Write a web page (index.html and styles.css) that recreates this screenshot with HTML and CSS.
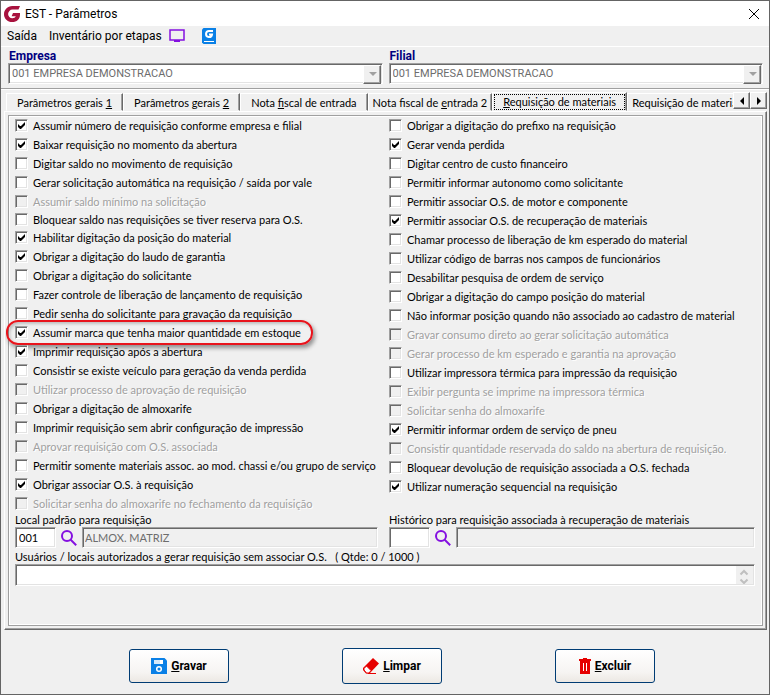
FILE: index.html
```html
<!DOCTYPE html>
<html lang="pt-BR">
<head>
<meta charset="utf-8">
<title>EST - Parâmetros</title>
<link rel="stylesheet" href="styles.css">
</head>
<body>
<div class="window">
  <header class="titlebar">
    <svg class="logo" viewBox="0 0 16 16" aria-hidden="true"><path fill="#a8123e" d="M16 0l-1.500 3.600H8.500A4.400 4.400 0 0 0 4.100 8a4.200 4.200 0 0 0 4.200 4.200c1.800 0 3-.7 3.500-1.900H7.600L9 7h7v1.400c0 4.600-3.200 7.600-7.800 7.600C3.500 16 0 12.700 0 8.200S3.500 0 8.200 0z"/></svg>
    <h1>EST - Parâmetros</h1>
    <button class="close" type="button" aria-label="Fechar"><svg viewBox="0 0 10 10"><path d="M0 0l10 10M10 0L0 10" stroke="#000" fill="none"/></svg></button>
  </header>
  <nav class="menu">
    <a href="#">Saída</a>
    <a href="#">Inventário por etapas</a>
    <button type="button" aria-label="Tela"><svg width="16" height="14" viewBox="0 0 16 14"><path d="M1 1h14v10H1z" fill="none" stroke="#8410e0" stroke-width="1.500"/><path d="M5 11h6v2H5z" fill="#8410e0"/></svg></button>
    <button type="button" aria-label="Ajuda"><svg width="14" height="16" viewBox="0 0 14 16"><path d="M1.500 0H14v16H1.500L0 14.500v-13z" fill="#0a80e6"/><path d="M11 3H7a3 3 0 1 0 3 3.500H7" fill="none" stroke="#fff" stroke-width="2"/><path d="M2 13.500h10" stroke="#fff"/></svg></button>
  </nav>
  <section class="company">
    <div class="field">
      <label for="empresa">Empresa</label>
      <div class="combo"><select id="empresa" disabled><option>001 EMPRESA DEMONSTRACAO</option></select></div>
    </div>
    <div class="field">
      <label for="filial">Filial</label>
      <div class="combo"><select id="filial" disabled><option>001 EMPRESA DEMONSTRACAO</option></select></div>
    </div>
  </section>
  <main>
    <div class="tabbar">
      <div class="tabs" role="tablist">
        <button type="button" role="tab">Parâmetros gerais <u>1</u></button>
        <button type="button" role="tab">Parâmetros gerais <u>2</u></button>
        <button type="button" role="tab">Nota <u>f</u>iscal de entrada</button>
        <button type="button" role="tab" class="snug">Nota fiscal de <u>e</u>ntrada 2</button>
        <button type="button" role="tab" class="active" aria-selected="true"><span><u>R</u>equisição de materiais</span></button>
        <button type="button" role="tab" class="snug">Requisição de materiais</button>
      </div>
      <button class="scroll prev" type="button" aria-label="Anterior"></button>
      <button class="scroll next" type="button" aria-label="Próxima"></button>
    </div>
    <div class="page">
      <form class="sheet">
        <div class="column">
          <ul>
            <li><label><input type="checkbox" checked>Assumir número de requisição conforme empresa e filial</label></li>
            <li><label><input type="checkbox" checked>Baixar requisição no momento da abertura</label></li>
            <li><label><input type="checkbox">Digitar saldo no movimento de requisição</label></li>
            <li><label><input type="checkbox">Gerar solicitação automática na requisição / saída por vale</label></li>
            <li class="tight"><label class="off"><input type="checkbox" disabled>Assumir saldo mínimo na solicitação</label></li>
            <li class="tight"><label><input type="checkbox">Bloquear saldo nas requisições se tiver reserva para O.S.</label></li>
            <li><label><input type="checkbox" checked>Habilitar digitação da posição do material</label></li>
            <li><label><input type="checkbox" checked>Obrigar a digitação do laudo de garantia</label></li>
            <li><label><input type="checkbox">Obrigar a digitação do solicitante</label></li>
            <li><label><input type="checkbox">Fazer controle de liberação de lançamento de requisição</label></li>
            <li><label><input type="checkbox">Pedir senha do solicitante para gravação da requisição</label></li>
            <li><label class="marked"><input type="checkbox" checked>Assumir marca que tenha maior quantidade em estoque</label></li>
            <li><label><input type="checkbox" checked>Imprimir requisição após a abertura</label></li>
            <li><label><input type="checkbox">Consistir se existe veículo para geração da venda perdida</label></li>
            <li><label class="off"><input type="checkbox" disabled>Utilizar processo de aprovação de requisição</label></li>
            <li><label><input type="checkbox">Obrigar a digitação de almoxarife</label></li>
            <li><label><input type="checkbox">Imprimir requisição sem abrir configuração de impressão</label></li>
            <li><label class="off"><input type="checkbox" disabled>Aprovar requisição com O.S. associada</label></li>
            <li><label><input type="checkbox">Permitir somente materiais assoc. ao mod. chassi e/ou grupo de serviço</label></li>
            <li><label><input type="checkbox" checked>Obrigar associar O.S. à requisição</label></li>
            <li><label class="off"><input type="checkbox" disabled>Solicitar senha do almoxarife no fechamento da requisição</label></li>
          </ul>
          <div class="lookup">
            <label for="local">Local padrão para requisição</label>
            <div class="row">
              <input id="local" class="code" type="text" value="001">
              <button type="button" aria-label="Pesquisar local"><svg viewBox="0 0 16 16"><circle cx="6" cy="6" r="5" fill="none" stroke="#8410e0" stroke-width="2"/><path d="M9.700 9.700l5.500 5.500" stroke="#8410e0" stroke-width="2"/></svg></button>
              <input class="name" type="text" value="ALMOX. MATRIZ" aria-label="Nome do local" disabled>
            </div>
          </div>
        </div>
        <div class="column">
          <ul>
            <li><label><input type="checkbox">Obrigar a digitação do prefixo na requisição</label></li>
            <li><label><input type="checkbox" checked>Gerar venda perdida</label></li>
            <li><label><input type="checkbox">Digitar centro de custo financeiro</label></li>
            <li><label><input type="checkbox">Permitir informar autonomo como solicitante</label></li>
            <li><label><input type="checkbox">Permitir associar O.S. de motor e componente</label></li>
            <li><label><input type="checkbox" checked>Permitir associar O.S. de recuperação de materiais</label></li>
            <li><label><input type="checkbox">Chamar processo de liberação de km esperado do material</label></li>
            <li><label><input type="checkbox">Utilizar código de barras nos campos de funcionários</label></li>
            <li><label><input type="checkbox">Desabilitar pesquisa de ordem de serviço</label></li>
            <li><label><input type="checkbox">Obrigar a digitação do campo posição do material</label></li>
            <li><label><input type="checkbox">Não informar posição quando não associado ao cadastro de material</label></li>
            <li><label class="off"><input type="checkbox" disabled>Gravar consumo direto ao gerar solicitação automática</label></li>
            <li><label class="off"><input type="checkbox" disabled>Gerar processo de km esperado e garantia na aprovação</label></li>
            <li><label><input type="checkbox">Utilizar impressora térmica para impressão da requisição</label></li>
            <li><label class="off"><input type="checkbox" disabled>Exibir pergunta se imprime na impressora térmica</label></li>
            <li><label class="off"><input type="checkbox" disabled>Solicitar senha do almoxarife</label></li>
            <li><label><input type="checkbox" checked>Permitir informar ordem de serviço de pneu</label></li>
            <li><label class="off"><input type="checkbox" disabled>Consistir quantidade reservada do saldo na abertura de requisição.</label></li>
            <li><label><input type="checkbox">Bloquear devolução de requisição associada a O.S. fechada</label></li>
            <li><label><input type="checkbox" checked>Utilizar numeração sequencial na requisição</label></li>
          </ul>
          <div class="lookup">
            <label for="historico">Histórico para requisição associada à recuperação de materiais</label>
            <div class="row">
              <input id="historico" class="code" type="text">
              <button type="button" aria-label="Pesquisar histórico"><svg viewBox="0 0 16 16"><circle cx="6" cy="6" r="5" fill="none" stroke="#8410e0" stroke-width="2"/><path d="M9.700 9.700l5.500 5.500" stroke="#8410e0" stroke-width="2"/></svg></button>
              <input class="name" type="text" aria-label="Nome do histórico" disabled>
            </div>
          </div>
        </div>
        <div class="users">
          <label for="usuarios">Usuários / locais autorizados a gerar requisição sem associar O.S. &nbsp; ( Qtde: 0 / 1000 )</label>
          <div class="memo">
            <textarea id="usuarios" rows="1"></textarea>
            <svg width="17" height="18" viewBox="0 0 17 18" aria-hidden="true"><path d="M0 0h17v18H0z" fill="#f0f0f0"/><path d="M4.500 8.500L8 5l3.500 3.500M4.500 13.500L8 17l3.500-3.500" fill="none" stroke="#bfbfbf" stroke-width="2"/></svg>
          </div>
        </div>
      </form>
    </div>
  </main>
  <footer>
    <button type="button"><svg viewBox="0 0 16 16"><path d="M0 0h13.500L16 2.500V16H0z" fill="#0a80e6"/><path d="M3 2h9v4H3z" fill="#fff"/><path d="M3 2h6v4H3z" fill="#d5e9fa"/><circle cx="8" cy="11" r="2.300" fill="none" stroke="#fff" stroke-width="1.500"/></svg><span><u>G</u>ravar</span></button>
    <button type="button" class="tall"><svg viewBox="0 0 16 16"><path d="M10 0l6 5.500L6.500 15.500H3L0 12V10z" fill="#e60000"/><path d="M3.500 8l4.500 4.500-2 2.500H3.500L1 12v-1.500z" fill="#fff"/><path d="M3.500 8l4.500 4.500-2 2.500H3.500L1 12v-1.500zM5 15.500h8" fill="none" stroke="#e60000"/></svg><span><u>L</u>impar</span></button>
    <button type="button"><svg class="bin" viewBox="0 0 12 16"><path d="M0 1h4V0h4v1h4v2H0zM1 3h10v13H1z" fill="#e60000"/><path d="M4.500 5v8M7.500 5v8" stroke="#fff"/></svg><span><u>E</u>xcluir</span></button>
  </footer>
</div>
</body>
</html>
```
FILE: styles.css
```css
* { box-sizing: border-box; }
body {
  margin: 0;
  background: #f0f0f0;
  color: #000;
  font: 11px/13px Lato, "Liberation Sans", sans-serif;
}
button, input, select, textarea { font: inherit; color: inherit; margin: 0; }
button { padding: 0; border: 0; background: none; }
svg { display: block; }
u { text-decoration-thickness: 1px; text-underline-offset: 1px; text-decoration-skip-ink: none; }

.window {
  min-height: 100vh;
  border: 1px solid #646464;
  display: flex;
  flex-direction: column;
}

.titlebar {
  display: flex;
  align-items: center;
  gap: 5px;
  height: 25px;
  padding: 0 10px 0 3px;
  background: #fff;
}
.logo { width: 16px; height: 16px; }
.titlebar h1 { flex: 1; margin: 0; font: 12px/14px Roboto, sans-serif; }
.close svg { width: 10px; height: 10px; }

.menu {
  display: flex;
  align-items: center;
  gap: 12px;
  height: 20px;
  padding: 0 6px;
  font: 12px/14px Roboto, sans-serif;
}
.menu a { color: inherit; text-decoration: none; }
.menu a + button { margin: 0 5px 0 -5px; }

.company {
  display: flex;
  gap: 6px;
  height: 43px;
  padding: 3px 6px 0 7px;
  border-top: 1px solid #fff;
  border-bottom: 1px solid #a0a0a0;
}
.field { flex: 1; }
.field label { display: block; padding-left: 1px; color: #000080; font: bold 12px/13px Roboto, sans-serif; }

.combo, .code, .name, .memo {
  border: 1px solid;
  border-color: #a0a0a0 #fff #fff #a0a0a0;
  box-shadow: inset 1px 1px #696969, inset -1px -1px #e3e3e3;
  background: #fff;
}
.combo { position: relative; height: 21px; padding: 1px; }
.combo select {
  appearance: none;
  display: block;
  width: 100%;
  height: 17px;
  padding: 0 18px 0 2px;
  border: 0;
  background: none;
  color: #6d6d6d;
  font-family: Roboto, sans-serif;
  opacity: 1;
}
.combo::after {
  content: "";
  position: absolute;
  top: 1px;
  right: 1px;
  width: 16px;
  height: 17px;
  border: 1px solid;
  border-color: #fff #696969 #696969 #fff;
  box-shadow: inset -1px -1px #a0a0a0;
  background: #f0f0f0;
}
.combo::before {
  content: "";
  position: absolute;
  z-index: 1;
  top: 8px;
  right: 5px;
  border: 4px solid transparent;
  border-top-color: #a0a0a0;
  border-bottom: 0;
}

main { padding: 2px 2px 0 3px; border-top: 1px solid #fff; }
.tabbar { display: flex; height: 19px; padding-left: 2px; }
.tabs { flex: 1; display: flex; align-items: flex-end; min-width: 0; overflow: hidden; }
.tabs button {
  flex: none;
  height: 18px;
  padding: 0 10px;
  border: 1px solid;
  border-color: #fff #696969 transparent #fff;
  box-shadow: inset -1px 0 #a0a0a0;
  white-space: nowrap;
}
.tabs .snug { padding: 0 4px; }
.tabs .active { height: 19px; padding: 0 1px; }
.tabs .active span { display: block; height: 16px; padding: 0 8px; border: 1px dotted #000; }
.scroll {
  flex: none;
  display: grid;
  place-items: center;
  width: 17px;
  height: 17px;
  border: 1px solid;
  border-color: #fff #696969 #696969 #fff;
  box-shadow: inset -1px -1px #a0a0a0;
}
.scroll::before { content: ""; border: 4px solid transparent; }
.prev::before { border-right-color: #000; border-left: 0; }
.next::before { border-left-color: #000; border-right: 0; }

.page {
  padding: 3px;
  border: 1px solid;
  border-color: #fff #696969 #696969 #fff;
  box-shadow: inset -1px -1px #a0a0a0;
}
.sheet {
  display: grid;
  grid-template-columns: 1fr 1fr;
  column-gap: 8px;
  padding: 0 7px 39px 6px;
  border: 1px solid #a0a0a0;
  box-shadow: inset -1px -1px #fff, inset 1px 1px #fff;
}
.column { display: flex; flex-direction: column; justify-content: space-between; min-width: 0; }
.column ul { margin: 0; padding: 0; list-style: none; }
.column li { display: flex; align-items: center; height: 19px; }
.column .tight { height: 18px; }
.column li label { display: flex; align-items: center; gap: 5px; position: relative; white-space: nowrap; }
.off { color: #a0a0a0; text-shadow: 1px 1px #fff; }

input[type="checkbox"] {
  appearance: none;
  flex: none;
  display: grid;
  place-items: center;
  width: 13px;
  height: 13px;
  border: 1px solid;
  border-color: #a0a0a0 #fff #fff #a0a0a0;
  box-shadow: inset 1px 1px #696969, inset -1px -1px #e3e3e3;
  background: #fff;
}
input[type="checkbox"]:disabled { background: #f0f0f0; }
input[type="checkbox"]:checked::before {
  content: "";
  width: 7px;
  height: 7px;
  background: #000;
  clip-path: polygon(0 2px, 2px 4px, 3px 4px, 7px 0, 7px 3px, 3px 7px, 2px 7px, 0 5px);
}

.marked::after {
  content: "";
  position: absolute;
  inset: -6px -12px -6px -9px;
  border: 2px solid #e8141c;
  border-radius: 12px;
  box-shadow: 2px 3px 4px #0006, inset 2px 2px 3px #0003;
  pointer-events: none;
}

.row { display: flex; align-items: center; height: 21px; }
.lookup label { display: block; margin-bottom: 1px; }
.row .code { width: 41px; height: 21px; padding: 0 3px; }
.row button { margin: 0 5px; }
.row button svg { width: 16px; height: 16px; }
.row .name { flex: 1; min-width: 0; height: 21px; padding: 0 2px; background: #f0f0f0; color: #6d6d6d; }
.column:first-child .row { padding-right: 3px; }

.users { grid-column: 1 / -1; padding-top: 2px; }
.users label { display: block; margin-bottom: 1px; }
.memo { display: flex; height: 22px; padding: 1px; }
.memo textarea { flex: 1; height: 18px; padding: 0; border: 0; background: none; resize: none; outline: 0; overflow: hidden; }

footer { display: flex; justify-content: space-between; align-items: center; margin-top: 18px; padding: 0 114px 0 128px; }
footer button {
  display: flex;
  align-items: center;
  justify-content: center;
  gap: 4px;
  width: 100px;
  height: 34px;
  border: 1px solid #003c74;
  border-radius: 3px;
  background: linear-gradient(#fff, #f6f4f2 70%, #ece8e3);
  font: bold 12px/14px Roboto, sans-serif;
}
footer .tall { height: 36px; }
footer svg { width: 16px; height: 16px; }
footer .bin { width: 12px; }
```
